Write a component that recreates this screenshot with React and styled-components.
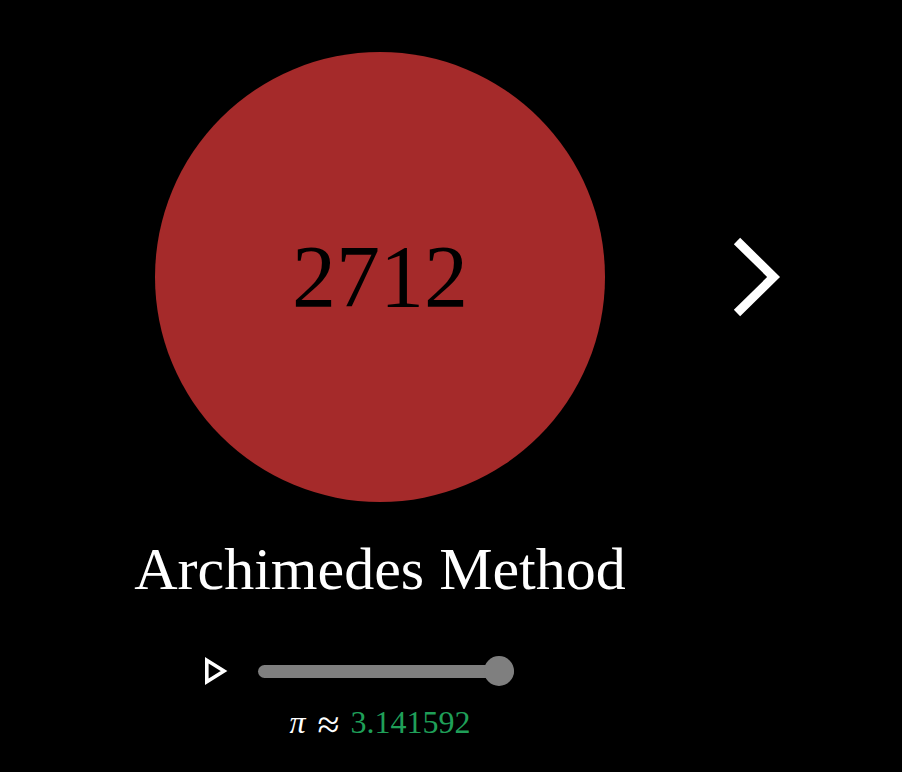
import React from 'react'
import styled, {createGlobalStyle} from 'styled-components'

const GlobalStyle = createGlobalStyle`
  html, body {
    margin: 0;
    padding: 0;
    background: #000;
  }
  body {
    font-family: "Liberation Serif", "DejaVu Serif", serif;
    color: #fff;
  }
`

const Page = styled.div`
  width: 902px;
  height: 772px;
  box-sizing: border-box;
  padding: 52px 0 0 155px;
  overflow: hidden;
`

const Column = styled.div`
  width: 450px;
  display: flex;
  flex-direction: column;
  align-items: center;
`

const Stage = styled.div`
  display: flex;
  align-items: center;
  gap: 125px;
  align-self: flex-start;
`

const Disc = styled.div`
  width: 450px;
  height: 450px;
  border-radius: 50%;
  background: #a52a2a;
  display: flex;
  align-items: center;
  justify-content: center;
  flex-shrink: 0;
`

const Count = styled.span`
  color: #000;
  font-size: 88px;
  line-height: 1;
`

const NextButton = styled.button`
  background: none;
  border: 0;
  padding: 0;
  display: flex;
  cursor: pointer;
`

const Title = styled.h1`
  margin: 37px 0 0;
  font-weight: normal;
  font-size: 60px;
  line-height: 60px;
  white-space: nowrap;
`

const Controls = styled.div`
  align-self: flex-start;
  margin: 57px 0 0 48px;
  display: flex;
  align-items: center;
  gap: 29px;
  height: 30px;
`

const PlayButton = styled.button`
  background: none;
  border: 0;
  padding: 0;
  display: flex;
  cursor: pointer;
`

const Slider = styled.div`
  position: relative;
  width: 256px;
  height: 30px;
  display: flex;
  align-items: center;
`

const Track = styled.div`
  width: 100%;
  height: 13px;
  border-radius: 7px;
  background: #7f7f7f;
`

const Thumb = styled.div`
  position: absolute;
  top: 0;
  left: ${({pos}) => `calc(${pos}% - 30px)`};
  width: 30px;
  height: 30px;
  border-radius: 50%;
  background: #7f7f7f;
`

const Estimate = styled.div`
  margin-top: 20px;
  font-size: 32px;
  line-height: 32px;
  white-space: nowrap;
`

const Pi = styled.i`
  margin-right: 12px;
`

const Approx = styled.span`
  font-size: 40px;
  line-height: 32px;
  vertical-align: -5px;
  margin-right: 11px;
`

const Value = styled.span`
  color: #1f9f58;
`

function Chevron() {
    return (
        <svg width="52" height="86" viewBox="0 0 52 86">
            <polyline points="7,7 43.6,43 7,79" fill="none" stroke="#fff" strokeWidth="9" strokeLinecap="butt" strokeLinejoin="miter" />
        </svg>
    )
}

function PlayIcon() {
    return (
        <svg width="26" height="30" viewBox="0 0 26 30" style={{overflow: 'visible'}}>
            <polygon points="3.8,4.2 21,15 3.8,25.8" fill="none" stroke="#fff" strokeWidth="3.6" strokeLinejoin="miter" />
        </svg>
    )
}

export default function App() {
    const progress = 100
    return (
        <>
            <GlobalStyle />
            <Page>
                <Column>
                    <Stage>
                        <Disc><Count>2712</Count></Disc>
                        <NextButton aria-label="next"><Chevron /></NextButton>
                    </Stage>
                    <Title>Archimedes Method</Title>
                    <Controls>
                        <PlayButton aria-label="play"><PlayIcon /></PlayButton>
                        <Slider>
                            <Track />
                            <Thumb pos={progress} />
                        </Slider>
                    </Controls>
                    <Estimate>
                        <Pi>π</Pi><Approx>≈</Approx><Value>3.141592</Value>
                    </Estimate>
                </Column>
            </Page>
        </>
    )
}
